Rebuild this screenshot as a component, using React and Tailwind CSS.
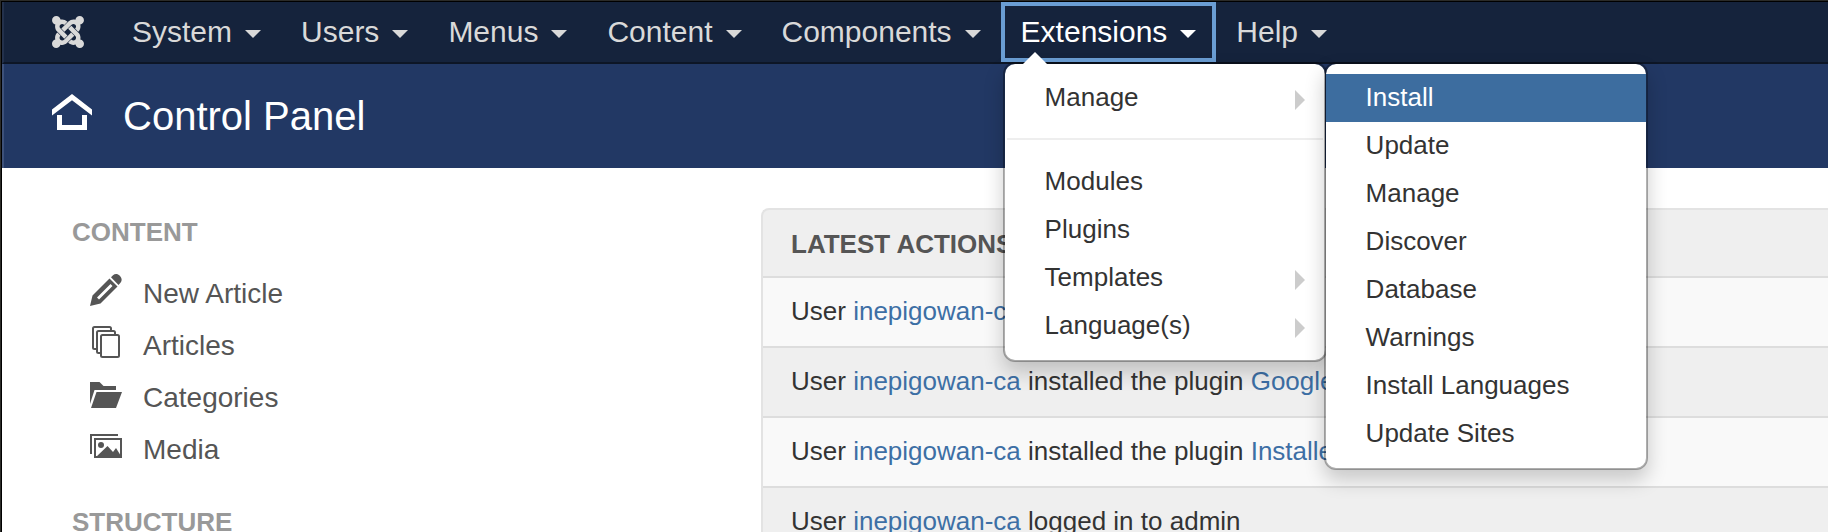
import { ImJoomla } from "react-icons/im";

const navItems = ["System", "Users", "Menus", "Content", "Components", "Extensions", "Help"];

const manageItems = ["Install", "Update", "Manage", "Discover", "Database", "Warnings", "Install Languages", "Update Sites"];

const extensionItems = [
  { label: "Modules" },
  { label: "Plugins" },
  { label: "Templates", sub: true },
  { label: "Language(s)", sub: true },
];

const actions = [
  { verb: "logged out from admin" },
  { verb: "installed the plugin", target: "Google" },
  { verb: "installed the plugin", target: "Installer" },
  { verb: "logged in to admin" },
];

const menuBox =
  "absolute w-[324px] rounded-xl border-2 border-black/30 bg-white bg-clip-padding py-2.5 text-[26px] leading-[46px] text-[#333] shadow-[0_10px_20px_rgba(0,0,0,0.2)]";

function Caret() {
  return (
    <svg className="h-2 w-4" viewBox="0 0 16 8" fill="currentColor" aria-hidden="true">
      <path d="M0 0h16L8 8z" />
    </svg>
  );
}

function SubArrow() {
  return (
    <svg className="mt-1.5 h-5 w-2.5 text-[#ccc]" viewBox="0 0 10 20" fill="currentColor" aria-hidden="true">
      <path d="M0 0l10 10L0 20z" />
    </svg>
  );
}

function MenuLink({ label, sub, active }) {
  return (
    <li>
      <a
        href="#"
        className={`flex items-center justify-between pr-5 pb-0.5 pl-10 ${active ? "bg-[#3d6d9f] text-white" : ""}`}
      >
        {label}
        {sub && <SubArrow />}
      </a>
    </li>
  );
}

function ExtensionsMenu() {
  return (
    <>
      <ul className={`${menuBox} top-[60px] left-0.5 z-10`}>
        <MenuLink label="Manage" sub />
        <li className="mx-0.5 mt-4 mb-[18px] h-0.5 bg-[#eee]" />
        {extensionItems.map((item) => (
          <MenuLink key={item.label} {...item} />
        ))}
      </ul>
      <svg className="absolute top-[50px] left-[22px] z-20 h-3 w-6" viewBox="0 0 24 12" fill="#fff" aria-hidden="true">
        <path d="M0 12L12 0l12 12z" />
      </svg>
      <ul className={`${menuBox} top-[60px] left-[323px] z-30`}>
        {manageItems.map((label) => (
          <MenuLink key={label} label={label} active={label === "Install"} />
        ))}
      </ul>
    </>
  );
}

function HomeIcon() {
  return (
    <svg className="h-9 w-10" viewBox="0 0 40 36" fill="none" stroke="#fff" aria-hidden="true">
      <path d="M0 15.5L20 0l20 15.5V21.5L20 6.2 0 21.5z" fill="#fff" stroke="none" />
      <path d="M7.500 21v12.500h25V21" strokeWidth="5" />
    </svg>
  );
}

function PencilIcon() {
  return (
    <svg className="size-8" viewBox="0 0 32 32" fill="currentColor" aria-hidden="true">
      <path
        fillRule="evenodd"
        d="M0 32l2.500-10.500L19.500 4.500l8 8L10.500 29.500zM7 23.500l2 2L22.500 12l-2-2z"
      />
      <path d="M21 3.200L23 1.200c2-1.700 4.800-1.500 6.800.5s2.600 5 .7 7l-2 2.200z" />
    </svg>
  );
}

function ArticlesIcon() {
  return (
    <svg className="size-8" viewBox="0 0 32 32" fill="none" stroke="currentColor" strokeWidth="2" aria-hidden="true">
      <rect x="11" y="9" width="18" height="22" rx="1.500" />
      <path d="M10 27H8.500Q7 27 7 25.500V6.500Q7 5 8.500 5h15Q25 5 25 6.500V8" />
      <path d="M6 23H4.500Q3 23 3 21.500V2.500Q3 1 4.500 1h15Q21 1 21 2.500V4" />
    </svg>
  );
}

function FolderIcon() {
  return (
    <svg className="size-8" viewBox="0 0 32 32" fill="currentColor" aria-hidden="true">
      <path d="M0 4h9.500l4 4H26v4H4.500L0 26z" />
      <path d="M6.500 14H32l-6 16H1z" />
    </svg>
  );
}

function MediaIcon() {
  return (
    <svg className="size-8" viewBox="0 0 32 32" fill="none" stroke="currentColor" strokeWidth="2" aria-hidden="true">
      <path d="M28 5H1v19" />
      <rect x="5" y="9" width="26" height="18" />
      <circle cx="11" cy="15" r="3" fill="currentColor" stroke="none" />
      <path d="M6 27l11.500-11 5.500 6 3-4 5 8v1z" fill="currentColor" stroke="none" />
    </svg>
  );
}

const contentLinks = [
  { label: "New Article", Icon: PencilIcon },
  { label: "Articles", Icon: ArticlesIcon },
  { label: "Categories", Icon: FolderIcon },
  { label: "Media", Icon: MediaIcon },
];

export default function App() {
  return (
    <div className="h-screen overflow-hidden border-t border-l border-[#2b2b28] bg-white font-['Liberation_Sans',Arial,sans-serif] text-[#333]">
      <div className="flex h-full flex-col border-t border-l border-black">
        <nav className="flex h-[62px] shrink-0 items-stretch border-b-2 border-l-2 border-b-[#0d1626] border-l-[#23314c] bg-[#15233c] text-[30px] text-[#d9d9d9]">
          <a href="#" aria-label="Joomla" className="flex items-center pr-7 pl-12">
            <ImJoomla className="size-8" />
          </a>
          <ul className="flex items-stretch">
            {navItems.map((label) => {
              const open = label === "Extensions";
              return (
                <li key={label} className="relative">
                  <button
                    type="button"
                    aria-expanded={open}
                    className={`flex h-full items-center gap-[13px] border-4 px-4 leading-[52px] whitespace-nowrap ${
                      open ? "border-[#6a9dd3] text-white" : "border-transparent"
                    }`}
                  >
                    {label}
                    <span className="pt-1">
                      <Caret />
                    </span>
                  </button>
                  {open && <ExtensionsMenu />}
                </li>
              );
            })}
          </ul>
        </nav>

        <header className="flex h-[104px] shrink-0 items-center gap-[31px] border-l-2 border-[#3d517a] bg-[#223864] pl-12 text-white">
          <span className="-mt-2">
            <HomeIcon />
          </span>
          <h1 className="text-[40px] leading-[48px]">Control Panel</h1>
        </header>

        <div className="grid grow grid-cols-[759px_1fr]">
          <aside className="pt-[46px] pl-[70px]">
            <h2 className="text-[26px] leading-9 font-bold text-[#999]">CONTENT</h2>
            <ul className="mt-[18px] pl-[18px] text-[28px] leading-[52px] text-[#555]">
              {contentLinks.map(({ label, Icon }) => (
                <li key={label}>
                  <a href="#" className="flex h-[52px] items-start gap-[21px]">
                    <span className="pt-1.5">
                      <Icon />
                    </span>
                    {label}
                  </a>
                </li>
              ))}
            </ul>
            <h2 className="mt-7 text-[26px] leading-9 font-bold text-[#999]">STRUCTURE</h2>
          </aside>

          <main className="pt-10">
            <section className="rounded-tl-lg border-t-2 border-l-2 border-[#e3e3e3] bg-[#efefef] text-[26px]">
              <h2 className="px-7 pt-0.5 leading-[64px] font-bold text-[#555]">LATEST ACTIONS</h2>
              <ul>
                {actions.map(({ verb, target }, i) => (
                  <li
                    key={i}
                    className="border-t-2 border-[#ddd] px-7 pb-0.5 leading-[66px] whitespace-nowrap odd:bg-[#f9f9f9] even:bg-[#efefef]"
                  >
                    User{" "}
                    <a href="#" className="text-[#3d6fa5]">
                      inepigowan-ca
                    </a>{" "}
                    {verb}{" "}
                    {target && (
                      <a href="#" className="text-[#3d6fa5]">
                        {target}
                      </a>
                    )}
                  </li>
                ))}
              </ul>
            </section>
          </main>
        </div>
      </div>
    </div>
  );
}
